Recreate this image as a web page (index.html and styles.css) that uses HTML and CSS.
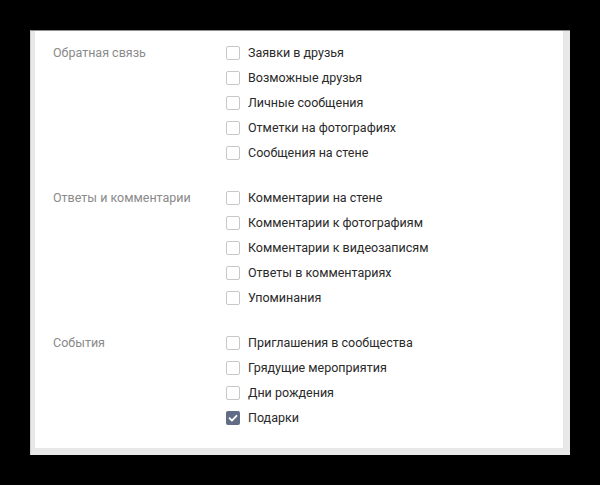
FILE: index.html
```html
<!DOCTYPE html>
<html lang="ru">
<head>
    <meta charset="UTF-8">
    <title>Уведомления</title>
    <link rel="stylesheet" href="styles.css">
</head>
<body>
    <main class="window">
        <div class="card">
            <section class="group">
                <h3 class="group-title">Обратная связь</h3>
                <ul class="options">
                    <li class="option"><span class="box"></span>Заявки в друзья</li>
                    <li class="option"><span class="box"></span>Возможные друзья</li>
                    <li class="option"><span class="box"></span>Личные сообщения</li>
                    <li class="option"><span class="box"></span>Отметки на фотографиях</li>
                    <li class="option"><span class="box"></span>Сообщения на стене</li>
                </ul>
            </section>
            <section class="group">
                <h3 class="group-title">Ответы и комментарии</h3>
                <ul class="options">
                    <li class="option"><span class="box"></span>Комментарии на стене</li>
                    <li class="option"><span class="box"></span>Комментарии к фотографиям</li>
                    <li class="option"><span class="box"></span>Комментарии к видеозаписям</li>
                    <li class="option"><span class="box"></span>Ответы в комментариях</li>
                    <li class="option"><span class="box"></span>Упоминания</li>
                </ul>
            </section>
            <section class="group">
                <h3 class="group-title">События</h3>
                <ul class="options">
                    <li class="option"><span class="box"></span>Приглашения в сообщества</li>
                    <li class="option"><span class="box"></span>Грядущие мероприятия</li>
                    <li class="option"><span class="box"></span>Дни рождения</li>
                    <li class="option"><span class="box checked">
                        <svg viewBox="0 0 14 14" width="14" height="14"><path d="M3.5 7.2l2.4 2.4 4.6-4.8" fill="none" stroke="#fff" stroke-width="1.8" stroke-linecap="round" stroke-linejoin="round"/></svg>
                    </span>Подарки</li>
                </ul>
            </section>
        </div>
    </main>
</body>
</html>
```

FILE: styles.css
```css
:root{
    --label-grey: #8a8a8a;
    --text: #2a2a2a;
    --box-border: #c8c8c8;
    --checked: #626c86;
}
*,*::before,*::after{
    box-sizing: border-box;
    margin: 0;
    padding: 0;
}
body{
    background-color: #000;
    font-family: Roboto, "Liberation Sans", sans-serif;
    font-size: 12.5px;
}
.window{
    width: 540px;
    height: 425px;
    margin: 30px 0 0 30px;
    border-top: 1px solid #8e8e8e;
    border-left: 1px solid #d0d0d0;
    background-color: #e8e8e8;
    padding: 0 7px 7px 4px;
}
.card{
    height: 100%;
    background-color: #fff;
    padding: 9px 0 0 18px;
    display: flex;
    flex-direction: column;
    gap: 20px;
}
.group{
    display: flex;
}
.group-title{
    width: 173px;
    font-size: 12.5px;
    font-weight: 400;
    line-height: 25px;
    color: var(--label-grey);
}
.options{
    list-style: none;
}
.option{
    display: flex;
    align-items: center;
    gap: 8px;
    height: 25px;
    color: var(--text);
}
.box{
    width: 14px;
    height: 14px;
    border: 1px solid var(--box-border);
    border-radius: 2px;
    display: flex;
    align-items: center;
    justify-content: center;
}
.box.checked{
    border: none;
    background-color: var(--checked);
}
```
